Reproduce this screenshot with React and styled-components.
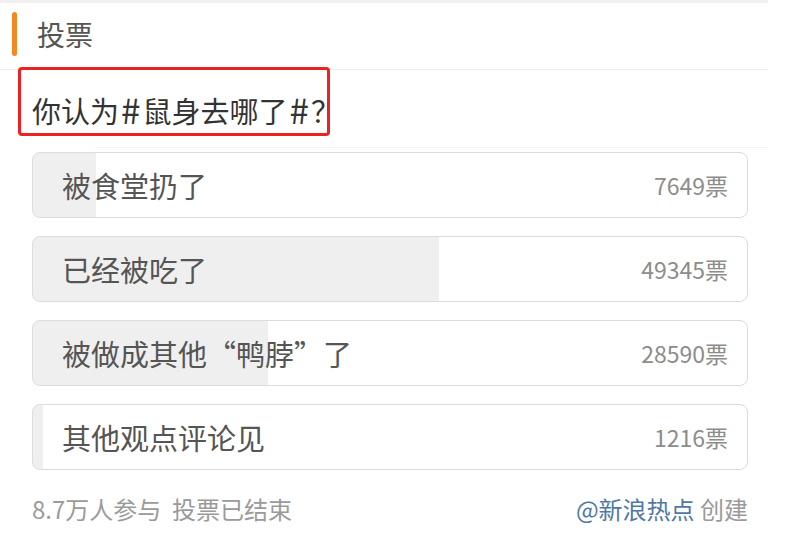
import styled, { createGlobalStyle } from "styled-components";

const GlobalStyle = createGlobalStyle`
  html, body {
    margin: 0;
    padding: 0;
    background: #fff;
  }
  body {
    font-family: "Noto Sans CJK SC", "Noto Sans", sans-serif;
  }
`;

const options = [
  { label: "被食堂扔了", votes: 7649 },
  { label: "已经被吃了", votes: 49345 },
  { label: "被做成其他“鸭脖”了", votes: 28590 },
  { label: "其他观点评论见", votes: 1216 },
];

const total = 86800;

export default function App() {
  return (
    <Page>
      <GlobalStyle />
      <TopBand />
      <Header>
        <Accent />
        <Title>投票</Title>
      </Header>
      <QuestionRow>
        <Question>
          你认为<Hash>#</Hash>鼠身去哪了<Hash>#</Hash>？
        </Question>
        <Highlight />
      </QuestionRow>
      <FaintLine />
      <OptionList>
        {options.map((o) => (
          <Option key={o.label} $pct={(o.votes / total) * 100}>
            <OptionLabel>{o.label}</OptionLabel>
            <OptionCount>{o.votes}票</OptionCount>
          </Option>
        ))}
      </OptionList>
      <Footer>
        <FooterInfo>8.7万人参与&nbsp;&nbsp;投票已结束</FooterInfo>
        <FooterInfo>
          <Creator>@新浪热点</Creator> 创建
        </FooterInfo>
      </Footer>
    </Page>
  );
}

const Page = styled.div`
  width: 800px;
  height: 533px;
  overflow: hidden;
  background: #fff;
`;

const TopBand = styled.div`
  width: 768px;
  height: 3px;
  background: #f0f0f0;
`;

const Header = styled.div`
  display: flex;
  align-items: center;
  width: 768px;
  height: 67px;
  box-sizing: border-box;
  border-bottom: 1px solid #eeeeee;
`;

const Accent = styled.div`
  width: 5px;
  height: 44px;
  margin-left: 12px;
  margin-top: -4px;
  border-radius: 3px;
  background: #f18a1e;
`;

const Title = styled.span`
  margin-left: 20px;
  margin-top: -4px;
  font-size: 28px;
  color: #555;
`;

const QuestionRow = styled.div`
  position: relative;
  height: 77px;
  display: flex;
  align-items: center;
  padding-left: 32px;
`;

const Question = styled.span`
  font-size: 29px;
  line-height: 40px;
  color: #333;
  margin-top: 2px;
`;

const Hash = styled.span`
  display: inline-block;
  margin: 0 2px;
  font-size: 35px;
  line-height: 1;
  transform: translateY(1px);
`;

const Highlight = styled.div`
  position: absolute;
  left: 18px;
  top: -3px;
  width: 312px;
  height: 69px;
  box-sizing: border-box;
  border: 3px solid #ec2222;
  border-radius: 4px;
`;

const FaintLine = styled.div`
  margin-left: 95px;
  width: 673px;
  height: 1px;
  background: #f2f2f2;
`;

const OptionList = styled.div`
  display: flex;
  flex-direction: column;
  gap: 18px;
  margin: 4px 0 0 32px;
  width: 716px;
`;

const Option = styled.div`
  display: flex;
  align-items: center;
  justify-content: space-between;
  height: 66px;
  box-sizing: border-box;
  padding: 0 19px 0 29px;
  border: 1px solid #dcdcdc;
  border-radius: 8px;
  background: linear-gradient(
    90deg,
    #efefef ${(p) => p.$pct}%,
    #ffffff ${(p) => p.$pct}%
  );
`;

const OptionLabel = styled.span`
  font-size: 29px;
  color: #555;
`;

const OptionCount = styled.span`
  font-size: 23px;
  color: #8c8c8c;
`;

const Footer = styled.div`
  display: flex;
  justify-content: space-between;
  align-items: center;
  width: 716px;
  margin: 21px 0 0 32px;
`;

const FooterInfo = styled.span`
  font-size: 24px;
  color: #9a9a9a;
`;

const Creator = styled.span`
  color: #4f78a6;
`;
